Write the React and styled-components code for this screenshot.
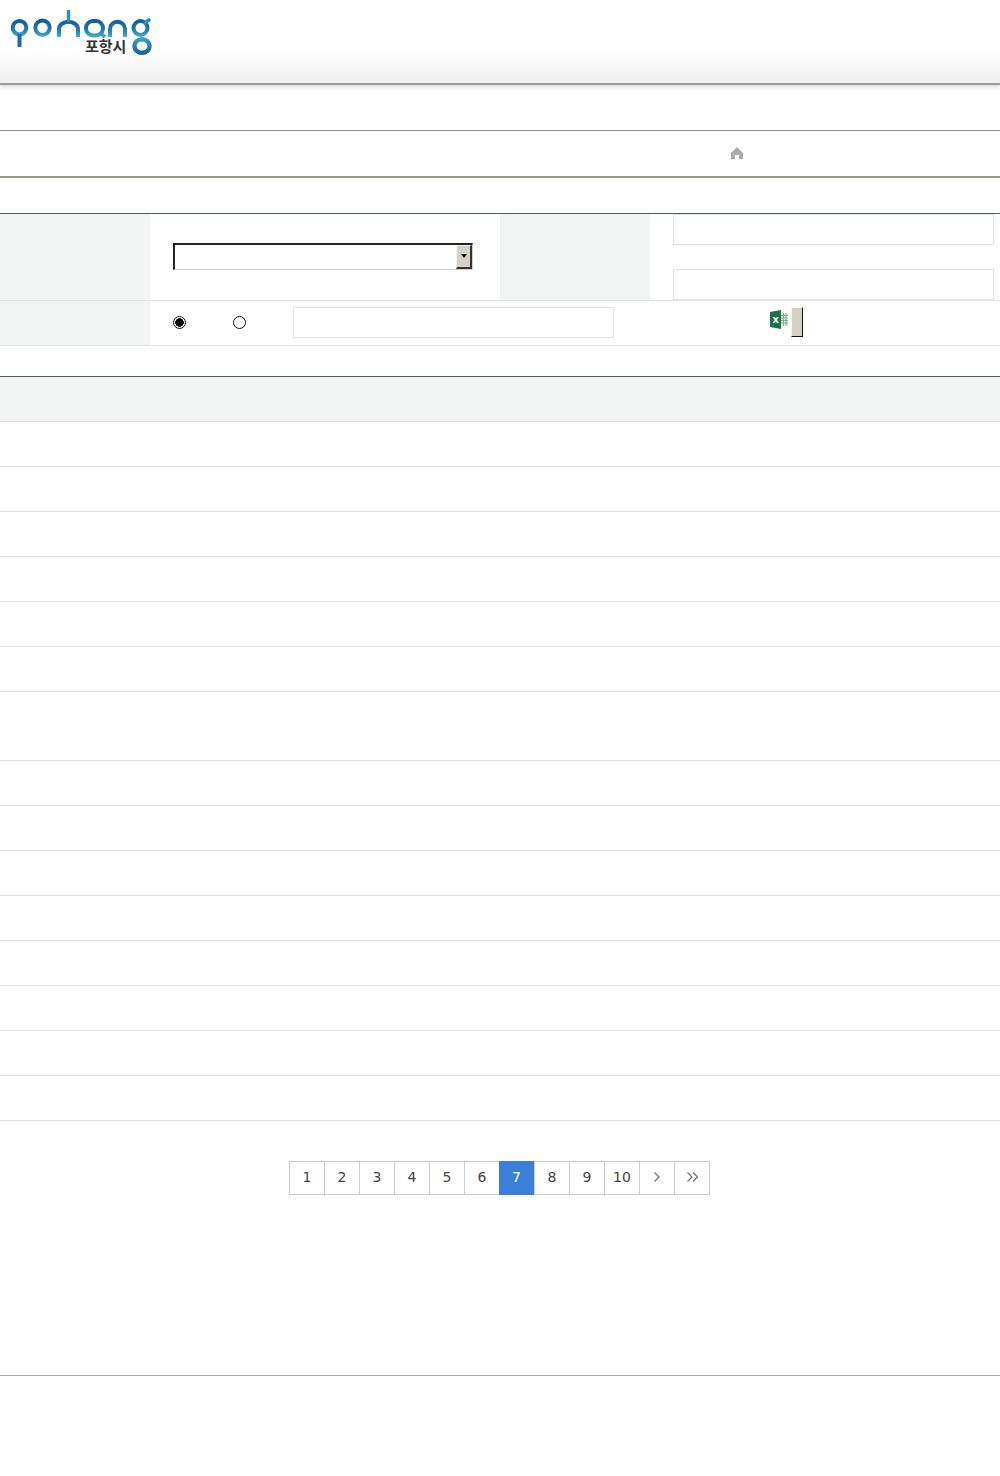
import React from "react";
import styled, { createGlobalStyle } from "styled-components";

const Global = createGlobalStyle`
  html, body { margin: 0; padding: 0; background: #fff; }
  body { font-family: "DejaVu Sans", sans-serif; font-size: 14px; color: #333; }
`;

const Page = styled.div`
  width: 1000px;
  height: 1476px;
  overflow: hidden;
`;

const Header = styled.header`
  height: 85px;
  padding: 10px 0 0 10px;
  box-sizing: border-box;
  background: linear-gradient(to bottom, #fff 0, #fff 52px, #efefef 84px);
  border-bottom: 2px solid #999;
  box-shadow: 0 2px 4px rgba(0,0,0,.14);
`;

const LogoWrap = styled.div`
  position: relative;
  width: 144px;
  height: 46px;
`;

const LogoText = styled.span`
  position: absolute;
  left: 75px;
  top: 27px;
  font-family: "Noto Sans CJK KR", sans-serif;
  font-size: 15px;
  font-weight: 700;
  line-height: 18px;
  color: #333;
`;

const Breadcrumb = styled.nav`
  margin-top: 45px;
  height: 43px;
  border-top: 1px solid #8f8d84;
  border-bottom: 2px solid #9a978d;
  display: flex;
  align-items: center;
  padding: 0 0 2px 730px;
`;

const FormGrid = styled.div`
  margin-top: 35px;
  border-top: 1px solid #44605f;
  display: grid;
  grid-template-columns: 150px 350px 150px 350px;
  grid-template-rows: 87px 45px;
`;

const Label = styled.div`
  background: #f2f4f4;
  border-bottom: 1px solid #e4e4e4;
`;

const Cell = styled.div`
  border-bottom: 1px solid #e4e4e4;
  padding: 0 0 2px 23px;
  display: flex;
  align-items: center;
`;

const InputStack = styled.div`
  border-bottom: 1px solid #e4e4e4;
  padding-left: 23px;
  display: flex;
  flex-direction: column;
  gap: 24px;
`;

const WideCell = styled.div`
  grid-column: span 3;
  border-bottom: 1px solid #e4e4e4;
  padding: 0 0 1px 23px;
  display: flex;
  align-items: center;
`;

const Select = styled.div`
  width: 300px;
  height: 27px;
  box-sizing: border-box;
  border-style: solid;
  border-width: 2px 1px 1px 2px;
  border-color: #222 #d4d0c8 #d4d0c8 #222;
  display: flex;
  justify-content: flex-end;
`;

const SelectButton = styled.div`
  width: 16px;
  height: 24px;
  box-sizing: border-box;
  background: #d4d0c8;
  border-style: solid;
  border-width: 1px 2px 2px 1px;
  border-color: #f4f4f0 #333 #333 #f4f4f0;
  display: flex;
  align-items: center;
  justify-content: center;

  &::after {
    content: "";
    border-style: solid;
    border-width: 4px 3.5px 0;
    border-color: #000 transparent transparent;
  }
`;

const TextInput = styled.input`
  display: block;
  width: 321px;
  height: 31px;
  box-sizing: border-box;
  border: 1px solid #e2e2e2;
  padding: 0;
  background: #fff;
  outline: none;
`;

const Radio = styled.input.attrs({ type: "radio" })`
  appearance: none;
  box-sizing: border-box;
  width: 13px;
  height: 13px;
  margin: 0 47px 0 0;
  border-radius: 50%;
  border: 1px solid #111;
  background: #fff;

  &:checked {
    background: radial-gradient(circle, #000 0 4px, #fff 4.5px);
  }
`;

const SearchInput = styled(TextInput)`
  margin: 0 156px 0 0;
`;

const HomeGlyph = styled.svg`
  display: block;
  flex: none;
`;

const ExcelGlyph = styled.svg`
  display: block;
  flex: none;
  margin-bottom: 6px;
`;

const ExportButton = styled.button`
  width: 12px;
  height: 30px;
  box-sizing: border-box;
  margin: 0 0 1px 2px;
  padding: 0;
  background: #d4d0c8;
  border-style: solid;
  border-width: 1px;
  border-color: #f4f4f0 #111 #111 #f4f4f0;
`;

const Table = styled.div`
  margin-top: 30px;
  border-top: 1px solid #44605f;
`;

const TableHead = styled.div`
  height: 44px;
  background: #f2f4f4;
  border-bottom: 1px solid #e0e0e0;
`;

const TableRow = styled.div`
  height: ${(p) => (p.$tall ? 68 : 44)}px;
  border-bottom: 1px solid #e0e0e0;
`;

const Pagination = styled.div`
  margin: 40px 0 0 289px;
  display: flex;
  width: max-content;
  height: 34px;
  box-sizing: border-box;
  border-top: 1px solid #ccc;
  border-bottom: 1px solid #ccc;
  border-left: 1px solid #ccc;
`;

const PageCell = styled.a`
  width: ${(p) => (p.$active ? 36 : 35)}px;
  box-sizing: border-box;
  margin: ${(p) => (p.$active ? "-1px 0 -1px -1px" : "0")};
  padding-bottom: 2px;
  border-right: 1px solid #ccc;
  display: flex;
  align-items: center;
  justify-content: center;
  font-size: 14px;
  color: ${(p) => (p.$active ? "#fff" : "#444")};
  background: ${(p) => (p.$active ? "#3b7fd8" : "#fff")};
`;

const Footer = styled.footer`
  margin-top: 180px;
  border-top: 1px solid #a8a8a8;
`;

function Logo() {
  return (
    <LogoWrap>
      <svg width="144" height="46" viewBox="0 0 144 46" fill="none">
        <defs>
          <linearGradient id="lg" x1="0" y1="8" x2="0" y2="28" gradientUnits="userSpaceOnUse">
            <stop offset="0" stopColor="#12558f" />
            <stop offset=".55" stopColor="#1f78ad" />
            <stop offset="1" stopColor="#4db4d2" />
          </linearGradient>
          <linearGradient id="lg2" x1="0" y1="26" x2="0" y2="46" gradientUnits="userSpaceOnUse">
            <stop offset="0" stopColor="#3fa8cb" />
            <stop offset="1" stopColor="#0f5a98" />
          </linearGradient>
        </defs>
        <g stroke="url(#lg)" strokeWidth="4">
          <circle cx="9.5" cy="17.7" r="6.8" />
          <circle cx="32.5" cy="17.7" r="7.2" />
          <path d="M49 27v-8a9.5 7.2 0 0 1 19 0v8" />
          <rect x="76" y="11" width="17" height="14.5" rx="7" />
          <path d="M91 24l4 3" />
          <path d="M100 27v-8a7.5 7.2 0 0 1 15 0v8" />
          <circle cx="130.5" cy="18" r="7" />
        </g>
        <path d="M9.5 24v13" stroke="#1b6ca6" strokeWidth="4" />
        <path d="M58.5 0v12" stroke="#2d8cba" strokeWidth="3.4" />
        <path d="M135 13l4-3" stroke="#2d8cba" strokeWidth="3.6" strokeLinecap="round" />
        <ellipse cx="132" cy="36" rx="7.6" ry="6.8" stroke="url(#lg2)" strokeWidth="4.4" />
      </svg>
      <LogoText>포항시</LogoText>
    </LogoWrap>
  );
}

function HomeIcon() {
  return (
    <HomeGlyph width="14" height="14" viewBox="0 0 14 14">
      <path d="M7 1 1 7v6h4V9h4v4h4V7z" fill="#aaa" />
    </HomeGlyph>
  );
}

function ExcelIcon() {
  return (
    <ExcelGlyph width="19" height="19" viewBox="0 0 19 19">
      <rect x="9" y="3" width="9" height="13" fill="#e6efe9" />
      <path d="M11 5.5h7M11 8h7M11 10.5h7M11 13h7M13.5 3v13M16 3v13" stroke="#7fae95" strokeWidth="1" />
      <path d="M0 2 11 0v19L0 17z" fill="#1e7145" />
      <text x="2.4" y="12.8" fontFamily="DejaVu Sans" fontSize="10" fontWeight="700" fill="#fff">x</text>
    </ExcelGlyph>
  );
}

function Next() {
  return (
    <svg width="8" height="12" viewBox="0 0 8 12" fill="none" stroke="#777" strokeWidth="1.3">
      <path d="M1.5 1.5 6 6l-4.5 4.5" />
    </svg>
  );
}

function Last() {
  return (
    <svg width="13" height="12" viewBox="0 0 13 12" fill="none" stroke="#777" strokeWidth="1.3">
      <path d="M1.5 1.5 6 6l-4.5 4.5M7 1.5 11.5 6 7 10.5" />
    </svg>
  );
}

const rows = Array.from({ length: 15 }, (_, i) => i);
const pages = [1, 2, 3, 4, 5, 6, 7, 8, 9, 10];

export default function App() {
  return (
    <Page>
      <Global />
      <Header>
        <Logo />
      </Header>
      <Breadcrumb>
        <HomeIcon />
      </Breadcrumb>
      <FormGrid>
        <Label />
        <Cell>
          <Select>
            <SelectButton />
          </Select>
        </Cell>
        <Label />
        <InputStack>
          <TextInput />
          <TextInput />
        </InputStack>
        <Label />
        <WideCell>
          <Radio name="t" defaultChecked />
          <Radio name="t" />
          <SearchInput />
          <ExcelIcon />
          <ExportButton />
        </WideCell>
      </FormGrid>
      <Table>
        <TableHead />
        {rows.map((i) => (
          <TableRow key={i} $tall={i === 6} />
        ))}
      </Table>
      <Pagination>
        {pages.map((p) => (
          <PageCell key={p} $active={p === 7}>
            {p}
          </PageCell>
        ))}
        <PageCell><Next /></PageCell>
        <PageCell><Last /></PageCell>
      </Pagination>
      <Footer />
    </Page>
  );
}
